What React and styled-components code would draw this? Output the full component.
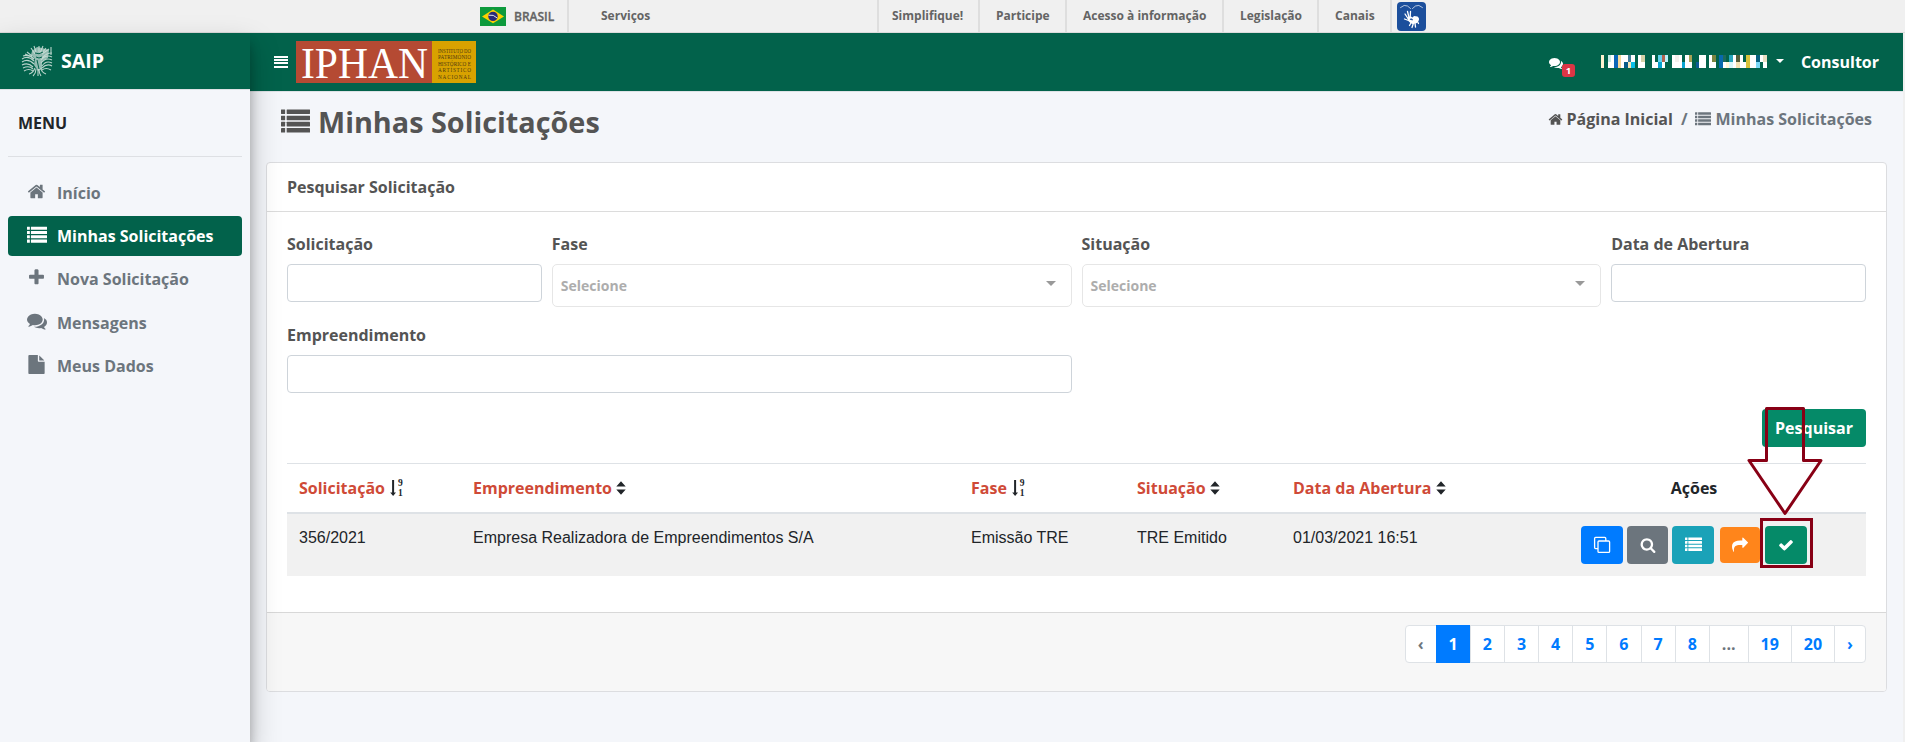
import React from "react";
import styled, { createGlobalStyle, css } from "styled-components";

const GREEN = "#02624b";
const SANS = '"Open Sans", "Noto Sans", sans-serif';

const GlobalStyle = createGlobalStyle`
  *, *::before, *::after { box-sizing: border-box; }
  body {
    margin: 0;
    background: #f0f0f0;
    color: #212529;
    font: 700 16px/1.5 ${SANS};
    overflow: hidden;
  }
`;

/* ---------- icons ---------- */

const PATHS = {
  comments:
    "M1408 768q0 139-94 257t-256.5 186.5-353.5 68.5q-86 0-176-16-124 88-278 128-36 9-86 16h-3q-11 0-20.5-8t-11.5-21q-1-3-1-6.5t.5-6.5 2-6l2.5-5 3.5-5.5 4-5 4.5-5 4-4.5q5-6 23-25t26-29.5 22.5-29 25-38.5 20.5-44q-124-72-195-177t-71-224q0-139 94-257t256.5-186.5 353.5-68.5 353.5 68.5 256.5 186.5 94 257zm384 256q0 120-71 224.5t-195 176.5q10 24 20.5 44t25 38.5 22.5 29 26 29.5 23 25q1 1 4 4.5t4.5 5 4 5 3.5 5.5l2.5 5 2 6 .5 6.5-1 6.5q-3 14-13 22t-22 7q-50-7-86-16-154-40-278-128-90 16-176 16-271 0-472-132 58 4 88 4 161 0 309-45t264-129q125-92 192-212t67-254q0-77-23-152 129 71 204 178t75 230z",
  home:
    "M1472 992v480q0 26-19 45t-45 19h-384v-384h-256v384h-384q-26 0-45-19t-19-45v-480q0-1 .5-3t.5-3l575-474 575 474q1 2 1 6zm223-69l-62 74q-8 9-21 11h-3q-13 0-21-7l-692-577-692 577q-12 8-24 7-13-2-21-11l-62-74q-8-10-7-23.5t11-21.5l719-599q32-26 76-26t76 26l244 204v-195q0-14 9-23t23-9h192q14 0 23 9t9 23v408l219 182q10 8 11 21.5t-7 23.5z",
  file:
    "M1152 512v-472q22 14 36 28l408 408q14 14 28 36h-472zm-128 32q0 40 28 68t68 28h544v1056q0 40-28 68t-68 28h-1344q-40 0-68-28t-28-68v-1600q0-40 28-68t68-28h800v544z",
  plus:
    "M1600 736v192q0 40-28 68t-68 28h-416v416q0 40-28 68t-68 28h-192q-40 0-68-28t-28-68v-416h-416q-40 0-68-28t-28-68v-192q0-40 28-68t68-28h416v-416q0-40 28-68t68-28h192q40 0 68 28t28 68v416h416q40 0 68 28t28 68z",
  share:
    "M1792 640q0 26-19 45l-512 512q-19 19-45 19t-45-19-19-45v-256h-224q-98 0-175.5 6t-154 21.5-133 42.5-105.5 69.5-80 101-48.5 138.5-17.5 181q0 55 5 123 0 6 2.5 23.5t2.5 26.5q0 15-8.500 25t-23.500 10q-16 0-28-17-7-9-13-22t-13.500-30-10.500-24q-127-285-127-451 0-199 53-333 162-403 875-403h224v-256q0-26 19-45t45-19 45 19l512 512q19 19 19 45z",
  check:
    "M1671 566q0 40-28 68l-724 724-136 136q-28 28-68 28t-68-28l-136-136-362-362q-28-28-28-68t28-68l136-136q28-28 68-28t68 28l294 295 656-657q28-28 68-28t68 28l136 136q28 28 28 68z",
  search:
    "M1216 832q0-185-131.5-316.5t-316.5-131.5-316.5 131.5-131.5 316.5 131.5 316.5 316.5 131.5 316.5-131.5 131.5-316.5zm512 832q0 52-38 90t-90 38q-54 0-90-38l-343-342q-179 124-399 124-143 0-273.5-55.5t-225-150-150-225-55.5-273.5 55.5-273.5 150-225 225-150 273.5-55.5 273.5 55.5 225 150 150 225 55.5 273.5q0 220-124 399l343 343q37 37 37 90z",
};

const Svg = styled.svg`
  display: block;
  flex: none;
  fill: currentColor;
`;

function Icon({ name, size = 16 }) {
  return (
    <Svg width={size} height={size} viewBox="0 0 1792 1792">
      {name === "list" ? (
        [150, 534, 918, 1302].map((y) => (
          <g key={y}>
            <rect x="0" y={y} width="256" height="280" rx="24" />
            <rect x="350" y={y} width="1442" height="280" rx="24" />
          </g>
        ))
      ) : (
        <path d={PATHS[name]} />
      )}
    </Svg>
  );
}

const BarsIcon = () => (
  <Svg width="14" height="12" viewBox="0 0 14 12" shapeRendering="crispEdges">
    {[0, 3, 6, 10].map((y) => (
      <rect key={y} y={y} width="14" height="2" />
    ))}
  </Svg>
);

const CloneIcon = () => (
  <Svg width="18" height="18" viewBox="0 0 18 18">
    <g fill="none" stroke="currentColor" strokeWidth="1.3">
      <path d="M5 12.6H2.6q-1 0-1-1V2.4q0-1 1-1h9.2q1 0 1 1V5" />
      <rect x="5" y="5" width="11.6" height="11.4" rx="1" />
    </g>
  </Svg>
);

const SortIcon = () => (
  <Svg width="10" height="14" viewBox="0 0 10 14">
    <path d="M5 .3 9.7 5.6H.3zM5 13.7 .3 8.4h9.4z" />
  </Svg>
);

const SortDigits = styled.span`
  display: flex;
  flex-direction: column;
  font: 700 9.5px/10px "Liberation Serif", serif;
`;

const SortNumeric = styled.span`
  display: flex;
  align-items: center;
  gap: 2px;
  margin-left: 1px;
`;

const SortNumericIcon = () => (
  <SortNumeric>
    <Svg width="6" height="16" viewBox="0 0 6 16">
      <path d="M2.1 0h2v12.4H6L3.1 16 .2 12.4h1.9z" />
    </Svg>
    <SortDigits>
      <span>9</span>
      <span>1</span>
    </SortDigits>
  </SortNumeric>
);

/* ---------- government bar ---------- */

const GovBar = styled.div`
  display: flex;
  height: 33px;
  padding-left: 480px;
  background: #f0f0f0;
  border-bottom: 1px solid #dcdcdc;
  color: #646464;
  font: 700 12px/16px ${SANS};
`;

const GovItem = styled.div`
  display: flex;
  align-items: flex-start;
  width: ${(p) => p.$w}px;
  padding: 8px 0 0 ${(p) => p.$pad}px;
  border-right: 2px solid #dedede;
  white-space: nowrap;
`;

const Brazil = styled(GovItem)`
  gap: 8px;
  padding-top: 7px;
  span { padding-top: 2px; font-weight: 600; -webkit-text-stroke: 0.3px; }
`;

const LibrasBox = styled.div`
  display: flex;
  padding: 2px 0 0 5px;
`;

const Flag = () => (
  <Svg width="26" height="19" viewBox="0 0 26 19">
    <rect width="26" height="19" fill="#0d9a3c" />
    <path d="M13 2.6 24 9.4 13 16.2 2 9.4z" fill="#fdd000" />
    <circle cx="13" cy="9.4" r="4.7" fill="#2a2a78" />
    <path d="M8.6 8.2q5-1 8.6 2.8" stroke="#dfe6ee" strokeWidth="1" fill="none" />
  </Svg>
);

const Libras = () => (
  <Svg width="29" height="29" viewBox="0 0 29 29">
    <rect width="29" height="29" rx="4" fill="#1c4f9c" />
    <g fill="none" stroke="#fff" strokeLinecap="round">
      <path d="M3.5 5.5q4-3.5 7-1.5l3 2.5M25.5 5.5q-4-3.5-7-1.5l-3 2.5" strokeWidth=".9" opacity=".75" />
      <path d="M8 12l3 4.5M10.5 9.5l1.5 6M13.5 9.5l-.3 6M7.5 17l4 1.5" strokeWidth="1.3" />
      <path d="M12.500 23.5l2-3.5M15 25.5l1.5-4.5M18.5 25l-.5-4M21.5 21.5l-1.5-3" strokeWidth="1.3" />
    </g>
    <path d="M10.5 15.5l3.5-1 1.5 1 1.5-1.5 3.5.5q2 1 1.5 3.5l-2 3-4.5 1q-4.5-1.5-5-6.5z" fill="#fff" />
    <path d="M13 17.5q1.5-1 2.5.8" fill="none" stroke="#1c4f9c" strokeWidth="1.3" />
  </Svg>
);

/* ---------- shell ---------- */

const Shell = styled.div`
  display: flex;
  width: 1903px;
  height: 709px;
  background: #f4f6fa;
`;

const Sidebar = styled.aside`
  position: relative;
  z-index: 2;
  flex: none;
  width: 250px;
  background: #f4f6fa;
  box-shadow: 0 14px 28px rgba(0, 0, 0, 0.25), 0 10px 10px rgba(0, 0, 0, 0.22);
`;

const Brand = styled.div`
  display: flex;
  align-items: center;
  gap: 8px;
  height: 57px;
  padding: 0 0 1px 21px;
  border-bottom: 1px solid #dee2e6;
  background: ${GREEN};
  color: #fff;
  font: 700 19.6px/1.5 ${SANS};
`;

const BrandName = styled.span`
  padding-top: 1px;
`;

const Crest = () => (
  <Svg width="32" height="32" viewBox="0 0 32 32">
    <g fill="none" stroke="#b9d3cb" strokeWidth="1.1">
      <path d="M1 14q6-4 12 2M1 17q6-4 12 2M1 20q6-3 11 2M2 23q6-3 10 1M2 11q6-2 11 3M3 26q5-3 9 0" />
      <path d="M31 12q-6-3-11 3M31 15q-6-3-11 3M31 18q-6-3-10 3M31 21q-5-3-10 2M30 25q-5-3-9 0M31 8q-6 0-10 5" />
      <path d="M8 29q4-1 6-6M12 31q3-3 3-7M20 31q-2-3-2-7M25 29q-5-2-5-6M17 31v-7" />
      <path d="M6 7l5 4M10 3l4 6M13 1l2 6M18 1v6M22 1l-3 7M28 4l-7 5M30 2v8M4 9l7 3M25 3l-4 5" />
    </g>
    <path d="M11 6l5-4 5 1 7 2-1 8-6 3v8l-4 2-4-6 1-6-4-4z" fill="#c6dbd4" opacity=".75" />
    <path d="M14 8q4 2 8-1M15 12q3 2 6 0M16 15l2 9" stroke={GREEN} fill="none" />
  </Svg>
);

const MenuTitle = styled.div`
  margin: 0 8px 16px;
  padding: 21px 0 21px 10px;
  border-bottom: 1px solid #dee0e4;
  line-height: 24px;
`;

const Nav = styled.nav`
  display: flex;
  flex-direction: column;
  gap: 3.2px;
  padding: 0 8px;
`;

const NavItem = styled.a`
  display: flex;
  align-items: center;
  height: 40px;
  padding-left: 16px;
  border-radius: 4px;
  color: #6c757d;
  ${(p) =>
    p.$active &&
    css`
      background: ${GREEN};
      color: #fff;
    `}
`;

const NavIcon = styled.span`
  display: flex;
  justify-content: center;
  width: 25px;
  margin-right: 8px;
  padding-bottom: 3px;
`;

const Main = styled.div`
  flex: 1;
  min-width: 0;
`;

const Navbar = styled.header`
  display: flex;
  align-items: center;
  height: 59px;
  padding: 0 24px 1px 24px;
  background: ${GREEN};
  border-bottom: 1px solid #dee2e6;
  color: #fff;
`;

const LogoBox = styled.div`
  display: flex;
  margin-left: 8px;
  svg { overflow: visible; }
`;

const IphanLogo = () => (
  <Svg width="180" height="42" viewBox="0 0 180 42">
    <rect width="136" height="42" fill="#b54a33" />
    <rect x="136" width="44" height="42" fill="#d8a200" />
    <text
      x="5"
      y="37"
      textLength="127"
      lengthAdjust="spacingAndGlyphs"
      fontFamily="Liberation Serif, serif"
      fontWeight="400"
      fontSize="44"
      fill="#fff"
    >
      IPHAN
    </text>
    <g fontFamily="Liberation Serif, serif" fontWeight="400" fontSize="5.2" fill="#4f3a10">
      {["INSTITUTO DO", "PATRIMÓNIO", "HISTÓRICO E", "ARTÍSTICO", "NACIONAL"].map((t, i) => (
        <text key={t} x="142" y={11.5 + i * 6.5} textLength="33" lengthAdjust={i ? "spacing" : "spacingAndGlyphs"}>
          {t}
        </text>
      ))}
    </g>
  </Svg>
);

const NavbarRight = styled.div`
  display: flex;
  align-items: center;
  margin-left: auto;
`;

const MessagesLink = styled.div`
  position: relative;
  width: 14px;
  margin-right: 38px;
  padding-top: 2px;
`;

const Badge = styled.span`
  position: absolute;
  left: 13px;
  top: 10px;
  width: 13px;
  height: 13px;
  border-radius: 3px;
  background: #dc3545;
  font: 700 9.6px/13px ${SANS};
  text-align: center;
`;

const Caret = styled.span`
  margin: ${(p) => p.$margin};
  border: ${(p) => p.$size}px solid transparent;
  border-top-color: currentColor;
  border-bottom: 0;
`;

/* Two rows of colour blocks that hide the user's name */
const MOSAIC = [
  [0, 3, "#fff4d0", "#fff4d0"], [7, 3, "#c9ece8", "#fff"], [10, 3, "#fff", "#fff"], [13, 4, "#0b66b8", "#0b66b8"],
  [17, 3, "#f4d79b", "#f4d79b"], [20, 3, "#fff", "#fff"], [23, 4, "#fff", "#075b88"], [27, 3, "#417b98", "#f5e6b6"],
  [30, 4, "#fff", "#08bfe8"], [37, 3, "#fff", "#fff"], [40, 4, "#d5d2a9", "#fff"],
  [51, 3, "#fff", "#fff"], [54, 3, GREEN, "#fff"], [57, 4, "#64d2ee", "#08a2cf"], [61, 3, "#b1634f", "#fff"],
  [64, 3, "#b9f1fa", GREEN], [71, 3, "#fff", "#fff"], [74, 4, "#f4f0ed", "#fff"], [78, 3, "#fff", "#fff"],
  [81, 3, GREEN, "#08a6d3"], [84, 4, "#fff", "#fff"], [88, 3, "#a6a256", "#fff"],
  [95, 3, GREEN, "#0b5b93"], [98, 7, "#fff", "#fff"], [108, 3, "#fff", "#fff"], [111, 4, "#7a8440", "#fff"],
  [118, 4, "#0769ad", "#0769ad"], [122, 3, "#1d6a5c", "#fff"], [125, 3, GREEN, "#fff7d9"], [128, 4, "#26a6bc", "#d8f7fa"],
  [132, 3, "#fff", "#fff"], [135, 4, "#545d3a", "#f5e3b4"], [139, 3, "#fff", "#fff"], [142, 3, GREEN, "#fff"],
  [145, 4, "#d8c33c", "#d8c33c"], [149, 3, "#fff", "#fff"], [152, 3, "#fff", "#fff"], [155, 4, "#07607f", "#7bd9f8"],
  [159, 3, "#fff", GREEN], [162, 4, "#e9dfc3", "#fff"],
];

const UserMosaic = () => (
  <Svg width="166" height="13" viewBox="0 0 166 13" shapeRendering="crispEdges">
    {MOSAIC.map(([x, w, top, bottom]) => (
      <g key={x}>
        <rect x={x} width={w} height="7" fill={top} />
        <rect x={x} y="7" width={w} height="6" fill={bottom} />
      </g>
    ))}
  </Svg>
);

/* ---------- page ---------- */

const PageHead = styled.div`
  display: flex;
  justify-content: space-between;
  height: 70px;
  padding: 8px 31px 0 31px;
  color: #545454;
`;

const Title = styled.h1`
  display: flex;
  align-items: center;
  gap: 8px;
  height: 43px;
  margin: 0;
  font: 700 28.8px/43px ${SANS};
`;

const Breadcrumb = styled.div`
  display: flex;
  align-items: center;
  height: 24px;
  margin-top: 7px;
`;

const Crumb = styled.span`
  display: flex;
  align-items: center;
  gap: 4px;
  color: ${(p) => (p.$muted ? "#6c757d" : "inherit")};
`;

const Slash = styled.span`
  padding: 0 8px;
  color: #6c757d;
`;

const Card = styled.section`
  width: 1621px;
  height: 530px;
  margin-left: 16px;
  display: flex;
  flex-direction: column;
  border: 1px solid #dcdde0;
  border-radius: 4px;
  background: #fff;
`;

const CardHeader = styled.div`
  height: 49px;
  padding: 12px 20px;
  border-bottom: 1px solid #dcdcdc;
  color: #545454;
`;

const CardBody = styled.div`
  height: 400px;
  padding: 20px 20px 0;
`;

const Form = styled.div`
  display: grid;
  grid-template-columns: repeat(12, 1fr);
  column-gap: 10px;
  row-gap: 16px;
`;

const Field = styled.label`
  grid-column: span ${(p) => p.$span};
  display: flex;
  flex-direction: column;
  gap: 8px;
  color: #545454;
`;

const Input = styled.input`
  width: 100%;
  height: 38px;
  border: 1px solid #ced4da;
  border-radius: 4px;
  background: #fff;
`;

const Select = styled.div`
  display: flex;
  align-items: center;
  justify-content: space-between;
  height: 43px;
  padding: 0 15px 0 8px;
  border: 1px solid #e6e6e6;
  border-radius: 5px;
  color: #adadad;
  font: 700 14px/20px ${SANS};
  ${Caret} { color: #999; }
`;

const Actions = styled.div`
  display: flex;
  justify-content: flex-end;
  margin: 16px 0;
`;

const Button = styled.button`
  width: 104px;
  height: 38px;
  padding: 0;
  border: 0;
  border-radius: 4px;
  background: #058a68;
  color: #fff;
  font: 700 16px/24px ${SANS};
`;

const COLS = "174px 498px 166px 156px 241px 344px";

const HeadRow = styled.div`
  display: grid;
  grid-template-columns: ${COLS};
  height: 51px;
  border-top: 1px solid #dee2e6;
  border-bottom: 2px solid #dee2e6;
`;

const HeadCell = styled.div`
  display: flex;
  align-items: center;
  gap: 4px;
  padding-left: 12px;
  color: #cf4a37;
  svg, ${SortDigits} { color: #212529; }
  ${(p) =>
    p.$center &&
    css`
      justify-content: center;
      padding-left: 0;
      color: #212529;
    `}
`;

const Row = styled.div`
  display: grid;
  grid-template-columns: ${COLS};
  height: 62px;
  background: #f1f1f1;
  font: 400 16px/24px "Liberation Sans", Arial, sans-serif;
`;

const Cell = styled.div`
  padding: 12px 0 0 12px;
  white-space: nowrap;
`;

const ButtonCell = styled.div`
  display: flex;
  align-items: flex-start;
  gap: 4px;
  padding: 12px 0 0 59px;
`;

const ActionButton = styled.button`
  display: flex;
  align-items: center;
  justify-content: center;
  width: ${(p) => p.$w || 42}px;
  height: ${(p) => p.$h || 38}px;
  margin: ${(p) => p.$margin || 0};
  padding: 0 0 1px;
  border: 0;
  border-radius: 4px;
  background: ${(p) => p.$bg};
  color: #fff;
`;

const CardFooter = styled.div`
  flex: 1;
  display: flex;
  justify-content: flex-end;
  align-items: flex-start;
  padding: 12px 20px 0;
  border-top: 1px solid #d8d8d8;
  border-radius: 0 0 3px 3px;
  background: #f7f7f7;
`;

const PageLink = styled.a`
  height: 38px;
  margin-left: -1px;
  padding: 6px 12px;
  border: 1px solid ${(p) => (p.$active ? "#007bff" : "#dee2e6")};
  background: ${(p) => (p.$active ? "#007bff" : "#fff")};
  color: ${(p) => (p.$active ? "#fff" : p.$disabled ? "#6c757d" : "#007bff")};
  &:first-child { border-radius: 4px 0 0 4px; }
  &:last-child { border-radius: 0 4px 4px 0; }
`;

/* Marker drawn over the page: an arrow that points to the framed button */
const Marker = styled.svg`
  position: absolute;
  z-index: 3;
  left: 1740px;
  top: 400px;
  pointer-events: none;
`;

const MENU = [
  ["home", "Início"],
  ["list", "Minhas Solicitações"],
  ["plus", "Nova Solicitação"],
  ["comments", "Mensagens"],
  ["file", "Meus Dados"],
];

const HEADERS = [
  ["Solicitação", SortNumericIcon],
  ["Empreendimento", SortIcon],
  ["Fase", SortNumericIcon],
  ["Situação", SortIcon],
  ["Data da Abertura", SortIcon],
];

const VALUES = ["356/2021", "Empresa Realizadora de Empreendimentos S/A", "Emissão TRE", "TRE Emitido", "01/03/2021 16:51"];

const PAGES = ["‹", "1", "2", "3", "4", "5", "6", "7", "8", "...", "19", "20", "›"];

export default function App() {
  return (
    <>
      <GlobalStyle />
      <GovBar>
        <Brazil $w={89} $pad={0}>
          <Flag />
          <span>BRASIL</span>
        </Brazil>
        <GovItem $w={310} $pad={32}>Serviços</GovItem>
        <GovItem $w={101} $pad={13}>Simplifique!</GovItem>
        <GovItem $w={87} $pad={16}>Participe</GovItem>
        <GovItem $w={157} $pad={16}>Acesso à informação</GovItem>
        <GovItem $w={95} $pad={16}>Legislação</GovItem>
        <GovItem $w={73} $pad={16}>Canais</GovItem>
        <LibrasBox><Libras /></LibrasBox>
      </GovBar>

      <Shell>
        <Sidebar>
          <Brand>
            <Crest />
            <BrandName>SAIP</BrandName>
          </Brand>
          <MenuTitle>MENU</MenuTitle>
          <Nav>
            {MENU.map(([icon, label], i) => (
              <NavItem key={label} $active={i === 1}>
                <NavIcon><Icon name={icon} size={icon === "list" || icon === "comments" ? 20 : 19} /></NavIcon>
                {label}
              </NavItem>
            ))}
          </Nav>
        </Sidebar>

        <Main>
          <Navbar>
            <BarsIcon />
            <LogoBox><IphanLogo /></LogoBox>
            <NavbarRight>
              <MessagesLink>
                <Icon name="comments" size={14} />
                <Badge>1</Badge>
              </MessagesLink>
              <UserMosaic />
              <Caret $size={4.8} $margin="-1px 17px 0 9px" />
              Consultor
            </NavbarRight>
          </Navbar>

          <PageHead>
            <Title>
              <Icon name="list" size={29} />
              Minhas Solicitações
            </Title>
            <Breadcrumb>
              <Crumb><Icon name="home" size={15} />Página Inicial</Crumb>
              <Slash>/</Slash>
              <Crumb $muted><Icon name="list" size={16} />Minhas Solicitações</Crumb>
            </Breadcrumb>
          </PageHead>

          <Card>
            <CardHeader>Pesquisar Solicitação</CardHeader>
            <CardBody>
              <Form>
                <Field $span={2}>Solicitação<Input /></Field>
                <Field $span={4}>Fase<Select>Selecione<Caret $size={5} $margin="-5px 0 0" /></Select></Field>
                <Field $span={4}>Situação<Select>Selecione<Caret $size={5} $margin="-5px 0 0" /></Select></Field>
                <Field $span={2}>Data de Abertura<Input /></Field>
                <Field $span={6}>Empreendimento<Input /></Field>
              </Form>
              <Actions><Button>Pesquisar</Button></Actions>
              <HeadRow>
                {HEADERS.map(([label, Sort]) => (
                  <HeadCell key={label}>{label}<Sort /></HeadCell>
                ))}
                <HeadCell $center>Ações</HeadCell>
              </HeadRow>
              <Row>
                {VALUES.map((v) => <Cell key={v}>{v}</Cell>)}
                <ButtonCell>
                  <ActionButton $bg="#007bff"><CloneIcon /></ActionButton>
                  <ActionButton $bg="#6c757d" $w={41}><Icon name="search" /></ActionButton>
                  <ActionButton $bg="#1aa2b8"><Icon name="list" size={17} /></ActionButton>
                  <ActionButton $bg="#ff851b" $w={40} $h={36} $margin="1px 1px 0 2px"><Icon name="share" /></ActionButton>
                  <ActionButton $bg="#058a68"><Icon name="check" /></ActionButton>
                </ButtonCell>
              </Row>
            </CardBody>
            <CardFooter>
              {PAGES.map((p) => (
                <PageLink key={p} $active={p === "1"} $disabled={p === "‹" || p === "..."}>{p}</PageLink>
              ))}
            </CardFooter>
          </Card>
        </Main>
      </Shell>

      <Marker width="90" height="180" viewBox="0 0 90 180" fill="none" stroke="#880015" strokeWidth="3">
        <path d="M26.5 8.5h37v52H81L45 113.5 9 60.5h17.5z" strokeLinejoin="round" />
        <rect x="21.5" y="119.5" width="50" height="47" />
      </Marker>
    </>
  );
}
